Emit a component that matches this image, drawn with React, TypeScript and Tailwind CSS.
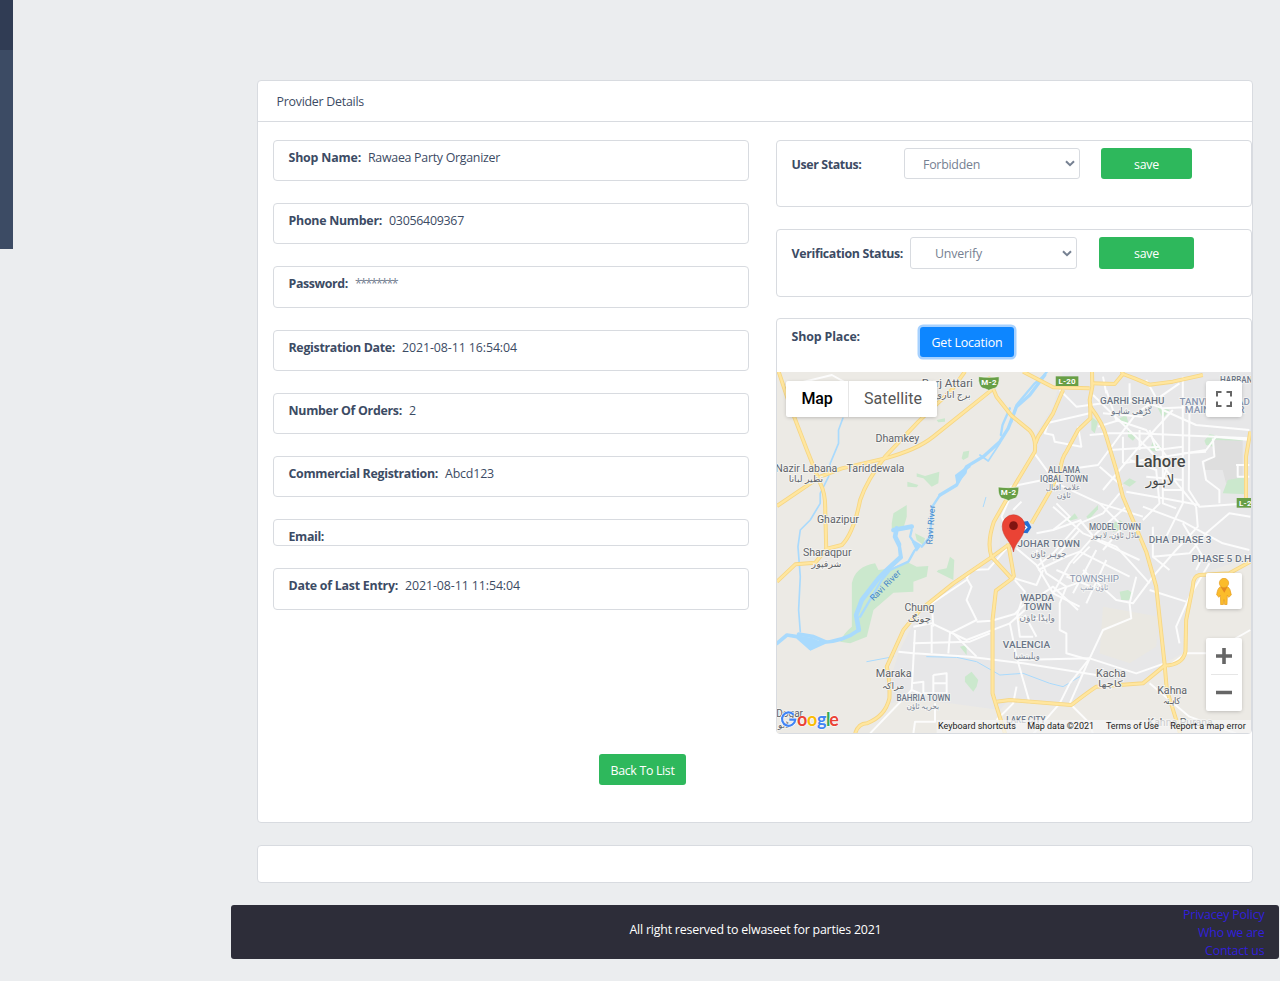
import React from "react";

const details = [
  { label: "Shop Name:", value: "Rawaea Party Organizer", lw: 72.5, vw: 132 },
  { label: "Phone Number:", value: "03056409367", lw: 93.5, vw: 75 },
  { label: "Password:", value: "********", lw: 59.5, vw: 42 },
  { label: "Registration Date:", value: "2021-08-11 16:54:04", lw: 106.5, vw: 115 },
  { label: "Number Of Orders:", value: "2", lw: 113.5, vw: 7 },
  { label: "Commercial Registration:", value: "Abcd123", lw: 149.5, vw: 49 },
  { label: "Email:", value: "", lw: 35.5, vw: 0 },
  { label: "Date of Last Entry:", value: "2021-08-11 11:54:04", lw: 109.5, vw: 115 },
];

// Text that is squeezed or stretched to an exact advance width.
function Fit({ w, children, className = "" }: { w: number; children: string; className?: string }) {
  const ref = React.useRef<HTMLSpanElement>(null);
  React.useLayoutEffect(() => {
    const el = ref.current;
    if (!el || !children) return;
    el.style.letterSpacing = "0px";
    const natural = el.getBoundingClientRect().width;
    el.style.letterSpacing = `${(w - natural) / children.length}px`;
  }, [w, children]);
  return (
    <span ref={ref} className={`inline-block whitespace-pre ${className}`}>
      {children}
    </span>
  );
}

type LabelProps = { x: number; y: number; w?: number; s?: number; c?: string; b?: number; children: string };
function L({ x, y, w, s = 33, c = "#5f6368", b = 400, children }: LabelProps) {
  return (
    <text
      x={x}
      y={y}
      textAnchor="middle"
      fontSize={s}
      fontWeight={b}
      fill={c}
      stroke="#f5f5f3"
      strokeWidth={5}
      paintOrder="stroke"
      textLength={w}
      lengthAdjust="spacingAndGlyphs"
    >
      {children}
    </text>
  );
}

const yellowRoads = [
  "M25 5L60 110L110 240L150 340Q166 370 165 420L168 535",
  "M585 5L545 60L445 155L345 260Q290 330 270 390Q250 490 215 525L168 537L135 578L75 583L20 635",
  "M20 408L150 320L215 295L345 265Q440 240 490 200L665 60",
  "M655 20L680 80L725 137L780 182Q800 205 795 245L735 345L672 455Q650 520 665 560L725 625",
  "M760 5L850 52L960 55",
  "M967 5L968 50L960 90L962 110Q1000 160 1010 200L1040 300L1060 380L1130 545L1160 650L1185 880L1192 960L1225 1065L1232 1092",
  "M880 60L850 130L805 200L795 225",
  "M962 100L962 145L925 180L890 245Q875 265 872 300L840 365L785 460",
  "M967 40L1035 42L1060 12L1095 25L1140 44L1210 35L1300 15",
  "M1060 12L1055 0",
  "M1443 185L1430 260L1430 405",
  "M255 1090Q265 1060 290 1060Q345 1040 358 985Q360 930 350 890L400 780L450 720L550 640L660 565L715 525",
  "M715 520L732 618L725 627L678 662L668 750L668 970L680 1010L706 1092",
  "M1443 575L1380 610L1290 615Q1270 620 1270 650L1250 750L1248 845Q1240 885 1185 887L1120 940L980 950Q950 970 905 1005L720 990L680 995",
];

const whiteRoads = [
  "M40 50L185 15L230 40", "M790 245L860 340L990 400L1120 440", "M720 350L820 330L880 300L985 285L1100 130L1230 40",
  "M830 160L960 130", "M835 160L825 190L850 195L855 215L935 230L925 170", "M960 195L1020 190L1100 190L1440 205",
  "M1000 100L1110 90L1180 115L1280 110L1400 130", "M970 75L1140 240L1280 410", "M1130 30L1180 120L1280 165L1440 180",
  "M1010 60L1040 150L1130 180L1200 270", "M1240 20L1240 400L1180 520", "M1260 120L1258 360L1290 410L1440 400",
  "M1180 120L1180 400L1220 415", "M1070 365L1180 385L1290 405", "M1050 370L1000 430L930 460L850 550L800 590",
  "M1080 270L1160 300L1170 400L1120 450", "M1120 410L1240 455L1360 520L1440 540", "M1280 410L1285 470L1220 540L1150 620",
  "M1443 440L1380 430L1310 490L1260 550L1150 560", "M1060 280L1310 240L1340 200L1440 210", "M1330 205L1335 260L1300 275L1310 330L1350 360L1350 400",
  "M1400 285L1440 285M1405 285L1405 320L1440 320", "M930 450L980 510L1110 570", "M850 410L940 490L1040 530L1140 640",
  "M740 535L800 585L850 670L930 710", "M1070 410L980 490L900 580L850 670", "M805 600L890 560L930 545L1080 620",
  "M800 540L830 610L890 650L870 700L870 780L890 790L890 850L960 870", "M940 600L1040 690L1090 700L1150 620", "M1080 700L1085 745L1000 780L960 865L900 1000",
  "M1100 620L1080 700M1010 570L950 700M980 540L910 670", "M1140 660L1250 695", "M590 625L605 650L590 690L605 720L620 750L540 790L535 850",
  "M590 625L605 600L655 598L715 530", "M430 770L485 760L590 810L720 760L765 720", "M490 770L485 700L590 630", "M385 845L430 850L600 860L760 880L980 915",
  "M435 780L425 960L460 975L460 935L425 940", "M430 820L600 815L660 790", "M485 765L485 850M550 790L620 860", "M490 915L530 910L530 970L460 970M490 915L490 970M490 940L530 940",
  "M425 960L300 1090", "M430 1090L435 1055L495 1055L495 1000", "M620 755L665 752L735 732L785 680", "M720 760L740 860L780 1000", "M740 870L960 865L1100 910L1185 880",
  "M960 865L900 940L870 1000L790 1092", "M1140 940L1260 1040L1400 1090", "M905 1005L960 1060L970 1092", "M1180 900L1250 850L1320 850L1443 780", "M1230 820L1220 770L1260 680L1320 580",
  "M680 1050L730 1000L740 950", "M735 630L765 665L742 735L750 800L790 800M765 735L800 800M740 745L830 745",
  "M735 625L800 645L820 600M850 665L920 640L950 600M860 600L930 630", "M790 690L850 650L925 720",
  "M850 480L900 440L860 400M990 400L1060 470L1000 540", "M1150 470L1150 560L1200 600M1240 460L1300 560L1280 600", "M870 60L920 110L1000 100M1000 130L1120 140M1020 240L1170 230",
  "M735 350L695 440L720 500M755 395L730 420M800 490L850 480L935 450M850 570L930 480M910 580L960 530M890 620L990 660",
  "M1210 120L1100 240L1000 360M1110 180L1110 240M1060 200L1060 280M1200 270L1180 330M990 290L1060 350M1130 320L1240 330M1180 360L1240 360",
  "M1010 70L1000 20M1080 40L1080 100M985 170L1050 150M1140 180L1160 240L1240 230M1240 250L1310 245",
];

const greens = [
  "M365 460L370 430L410 405L410 440L400 475L365 475Z", "M440 310L465 318L508 305L505 340L485 350L460 325L440 320Z", "M412 335L445 345L440 352L412 350Z",
  "M575 265L580 245L598 242L595 262L580 270Z", "M500 150L525 145L525 155L505 157Z", "M435 490L465 505L460 525L440 510Z",
  "M245 640Q255 590 315 580L325 600L365 595L410 575L440 590L475 588L470 620L430 635L430 665L370 668L310 720L290 800L240 820L210 815Q220 790 245 770Z",
  "M505 600L530 595L540 560L553 570L550 630L500 605Z", "M585 920L605 905L625 930L620 950L610 965L585 935Z", "M570 830L590 825L590 855Z",
  "M1050 145L1070 135L1078 165L1065 170Z", "M1160 105L1200 120L1180 145Z", "M1140 240L1150 215L1175 230L1160 245Z", "M1305 212L1320 193L1335 195L1332 230L1310 225Z",
  "M1375 330L1430 320L1430 373L1360 370Z", "M1335 205L1420 208L1420 212L1335 210Z", "M1060 340L1080 325L1100 335L1080 350Z", "M950 440L985 405L985 418L957 450Z",
  "M890 455L915 430L925 445Z", "M1030 460L1050 450L1065 460L1060 480L1030 485Z", "M1050 665L1075 660L1090 670L1080 690L1055 690Z", "M965 140L985 155L975 190L965 180Z", "M1075 180L1100 200L1090 212L1075 200Z",
];

function Shield({ x, y }: { x: number; y: number }) {
  return (
    <g transform={`translate(${x} ${y})`}>
      <path d="M-31 -18Q0 -14 31 -18Q32 8 20 16Q8 19 0 23Q-8 19 -20 16Q-32 8 -31 -18Z" fill="#689f46" stroke="#f4f7ee" strokeWidth="2" />
      <text y="7" textAnchor="middle" fontSize="24" fontWeight="700" fill="white" textLength="46">M-2</text>
    </g>
  );
}

function MapDrawing() {
  return (
    <svg className="block h-full w-full" viewBox="20 6 1425 1083" preserveAspectRatio="none" fontFamily="Roboto, 'DejaVu Sans', sans-serif">
      <rect x="0" y="0" width="1460" height="1100" fill="#eceae5" />
      <path
        d="M880 0L850 110L800 190L790 260L730 370L690 440L690 530L590 620L450 720L385 850L370 900L345 930L358 1000L430 990L540 1000L690 1020L720 985L900 1000L980 945L1120 935L1185 880L1248 845L1265 620L1450 560V0Z"
        fill="#e7e7e8"
      />
      <path d="M1000 710L1170 740L1160 830L1080 880L990 850Z" fill="#eae8e2" />
      <path d="M1335 210H1420V330L1370 340L1360 300H1300L1310 270L1335 255Z" fill="#dedede" />
      <g fill="#cbe8cd">{greens.map((d) => <path key={d} d={d} />)}</g>
      <g fill="none" stroke="#a9dafd" strokeLinecap="round" strokeLinejoin="round">
        <path d="M825 15L780 75L740 110L715 175L690 215L640 260L590 290L560 345L510 375" strokeWidth="10" />
        <path d="M835 0L820 20L795 40L740 105L725 155M720 115L698 165L693 195" strokeWidth="7" />
        <path d="M630 255L655 273L690 220M560 345L580 305L600 290" strokeWidth="5" />
        <path d="M510 375L487 410L480 500L455 530" strokeWidth="7" />
        <path d="M370 480L425 470M380 475L375 500L390 530L393 560L350 600L325 625L275 690L258 735L266 780" strokeWidth="14" />
        <path d="M425 480L420 500L440 530L415 575L360 600L335 630L270 740" strokeWidth="7" />
        <path d="M266 780Q220 815 150 818L120 835L80 800L50 795L20 820M85 792L130 800L165 815" strokeWidth="11" />
        <path d="M218 145L205 180L205 220L180 280L175 320L150 370L150 400L120 450L90 480L83 530L90 620L85 720L90 785" strokeWidth="5" />
        <path d="M290 875L370 860M470 860L560 862L620 875L690 915L760 910L840 940L880 950L930 920M648 382L640 410" strokeWidth="3" />
      </g>
      <path d="M393 528L405 480L420 510L440 530L400 570Z" fill="#eceae5" />
      <path d="M425 515L440 545L455 525L430 510ZM560 345L555 315L595 285L590 310ZM80 795L120 842L165 822L130 805Z" fill="#a9dafd" />
      <g fill="none" stroke="#fcfcfc" strokeWidth="6" strokeLinejoin="round">{whiteRoads.map((d) => <path key={d} d={d} />)}</g>
      <g fill="none" stroke="#f6d684" strokeWidth="12" strokeLinejoin="round">{yellowRoads.map((d) => <path key={d} d={d} />)}</g>
      <g fill="none" stroke="#ffe69f" strokeWidth="7" strokeLinejoin="round">{yellowRoads.map((d) => <path key={d} d={d} />)}</g>

      <L x={532} y={50} w={154}>Burj Attari</L>
      <L x={548} y={85} s={28}>برج اتاری</L>
      <L x={382} y={215} w={132}>Dhamkey</L>
      <L x={108} y={305} w={186}>Nazir Labana</L>
      <L x={107} y={337} s={27} w={104}>نظیر لبانا</L>
      <L x={316} y={305} w={174}>Tariddewala</L>
      <L x={203} y={459} w={126}>Ghazipur</L>
      <L x={171} y={558} w={146}>Sharaqpur</L>
      <L x={169} y={592} s={27} w={90}>شرقپور</L>
      <L x={448} y={724} w={90}>Chung</L>
      <L x={448} y={756} s={27} w={70}>چونگ</L>
      <L x={371} y={922} w={108}>Maraka</L>
      <L x={369} y={957} s={27} w={68}>مراکہ</L>
      <L x={58} y={1040} w={80}>Dogar</L>
      <L x={40} y={1075} s={27}>ڈنو</L>
      <L x={1024} y={920} w={90}>Kacha</L>
      <L x={1022} y={951} s={27} w={74}>کاچھا</L>
      <L x={1208} y={971} w={90}>Kahna</L>
      <L x={1206} y={1003} s={27} w={54}>کاہنہ</L>
      <L x={1232} y={1067} w={196}>Kahna Purana</L>
      <L x={1172} y={291} w={152} s={50} b={500} c="#444746">Lahore</L>
      <L x={1172} y={346} w={86} s={42} c="#444746">لاہور</L>
      <g>
        <L x={1088} y={102} w={194} s={28} b={500} c="#6b7587">GARHI SHAHU</L>
        <L x={1086} y={133} w={122} s={27} c="#6b7587">گڑھی شاہو</L>
        <L x={1408} y={39} w={112} s={26} b={500} c="#6b7587">HARBANS</L>
        <L x={1336} y={104} w={212} s={27} b={500} c="#8996b0">TANVEER ABAD</L>
        <L x={1336} y={129} w={180} s={27} b={500} c="#8996b0">MAIN BAZAR</L>
        <L x={883} y={310} w={96} s={26} b={500} c="#6b7587">ALLAMA</L>
        <L x={883} y={335} w={144} s={26} b={500} c="#6b7587">IQBAL TOWN</L>
        <L x={880} y={359} w={104} s={24} c="#7b8494">علامہ اقبال</L>
        <L x={882} y={384} w={42} s={24} c="#7b8494">ٹاؤن</L>
        <L x={1036} y={480} w={156} s={26} b={500} c="#6b7587">MODEL TOWN</L>
        <L x={1038} y={505} w={146} s={24} c="#7b8494">ماڈل ٹاؤن، لاہور</L>
        <L x={837} y={530} w={188} s={30} b={500} c="#6b7587">JOHAR TOWN</L>
        <L x={836} y={560} w={108} s={26} c="#7b8494">جوہر ٹاؤن</L>
        <L x={1232} y={519} w={188} s={29} b={500} c="#6b7587">DHA PHASE 3</L>
        <L x={1360} y={576} w={188} s={29} b={500} c="#6b7587">PHASE 5 D.H.</L>
        <L x={974} y={635} w={148} s={25} c="#8996b0">TOWNSHIP</L>
        <L x={974} y={660} w={84} s={24} c="#99a2b4">ٹاؤن شپ</L>
        <L x={802} y={692} w={102} s={29} b={500} c="#6b7587">WAPDA</L>
        <L x={804} y={721} w={84} s={29} b={500} c="#6b7587">TOWN</L>
        <L x={802} y={753} w={108} s={26} c="#7b8494">واپڈا ٹاؤن</L>
        <L x={770} y={835} w={142} s={29} b={500} c="#6b7587">VALENCIA</L>
        <L x={770} y={866} w={80} s={26} c="#7b8494">ویلینشیا</L>
        <L x={460} y={992} w={162} s={26} b={500} c="#6b7587">BAHRIA TOWN</L>
        <L x={458} y={1017} w={98} s={24} c="#7b8494">بحریہ ٹاؤن</L>
        <L x={768} y={1058} w={118} s={26} b={500} c="#6b7587">LAKE CITY</L>
      </g>
      <g fill="#4285c9" fontSize="26">
        <text transform="translate(487 524) rotate(-86)" textLength="118">Ravi River</text>
        <text transform="translate(310 694) rotate(-45)" textLength="118">Ravi River</text>
      </g>
      <Shield x={657} y={38} />
      <Shield x={716} y={369} />
      <rect x="858" y="19" width="68" height="29" fill="#689f46" />
      <text x="892" y="42" textAnchor="middle" fontSize="24" fontWeight="700" fill="white" textLength="52">L-20</text>
      <rect x="1402" y="384" width="60" height="29" fill="#689f46" />
      <text x="1409" y="407" fontSize="24" fontWeight="700" fill="white" textLength="52">L-20</text>

      <path d="M760 455L774 453L785 472L773 490L758 488Z" fill="#2670d3" />
      <path d="M762 464L771 472L762 481" fill="none" stroke="white" strokeWidth="4" />
      <path d="M731 546C727 517 697 502 697 469A34 35 0 0 1 765 469C765 502 735 517 731 546Z" fill="#ea4335" stroke="#c5372c" strokeWidth="1.5" />
      <circle cx="731" cy="467" r="13" fill="#811411" />

      <rect x="500" y="1050" width="945" height="41" fill="#f5f5f5" fillOpacity=".72" />
      <g fontSize="27" fill="#222">
        <text x="504" y="1076" textLength="234">Keyboard shortcuts</text>
        <text x="772" y="1076" textLength="201">Map data ©2021</text>
        <text x="1009" y="1076" textLength="159">Terms of Use</text>
        <text x="1202" y="1076" textLength="227">Report a map error</text>
      </g>
      <g fontSize="54" fontFamily="Lato, sans-serif" fontWeight="700" stroke="white" strokeWidth="3" paintOrder="stroke">
        <path d="M70 1034A20 20 0 1 0 75 1049H57" fill="none" stroke="white" strokeWidth="10" />
        <path d="M70 1034A20 20 0 1 0 75 1049H57" fill="none" stroke="#4285f4" strokeWidth="6.5" />
        <text x="80" y="1068" fill="#ea4335">o</text>
        <text x="110" y="1068" fill="#fbbc05">o</text>
        <text x="140" y="1068" fill="#4285f4">g</text>
        <text x="167" y="1068" fill="#34a853">l</text>
        <text x="177" y="1068" fill="#ea4335">e</text>
      </g>
    </svg>
  );
}

function Chevron() {
  return (
    <svg className="-mt-[2px] h-[7px] w-[10px]" viewBox="0 0 10 7" fill="none" stroke="#768192" strokeWidth="2">
      <path d="M1 1.2L5 5.2L9 1.2" />
    </svg>
  );
}

const control = "rounded-[2px] bg-white shadow-[0_1px_4px_-1px_rgba(0,0,0,0.3)]";

export default function App() {
  return (
    <div className="flex h-[981px] w-[1280px] overflow-hidden bg-[#ebedef] font-['Open_Sans',sans-serif] text-[12.4px] leading-[18px] text-[#3c4b64]">
      <aside className="h-[249px] w-[13px] shrink-0 bg-[#3c4b64]">
        <div className="h-[50px] bg-[#303c54]" />
      </aside>
      <div className="ml-[218px] flex w-[1048px] shrink-0 flex-col pt-[80px]">
        <main className="ml-[26px] w-[996px]">
          <section className="h-[743px] rounded-[4px] border border-[#d8dbe0] bg-white">
            <header className="h-[41px] border-b border-[#d8dbe0] pt-[12px] pl-[18.5px]">
              <Fit w={87.5}>Provider Details</Fit>
            </header>
            <div className="flex h-[613px] gap-[27px] pt-[18px] pl-[15px]">
              <div className="flex w-[476px] flex-col gap-[22px]">
                {details.map((d) => (
                  <div
                    key={d.label}
                    className={`flex shrink-0 gap-[7px] rounded-[4px] border border-[#d8dbe0] pt-[8px] pl-[14.5px] ${d.value ? "h-[41.2px]" : "h-[27.2px]"}`}
                  >
                    <Fit w={d.lw} className="font-bold">{d.label}</Fit>
                    <Fit w={d.vw} className={d.label === "Password:" ? "text-[#768192]" : ""}>{d.value}</Fit>
                  </div>
                ))}
              </div>
              <div className="flex w-[476px] shrink-0 flex-col gap-[22px]">
                <div className="flex h-[67px] shrink-0 rounded-[4px] border border-[#d8dbe0] pt-[7px] pl-[14.5px]">
                  <div className="w-[112.5px] pt-[8px] font-bold"><Fit w={70}>User Status:</Fit></div>
                  <div className="flex h-[31px] w-[176px] items-center justify-between rounded-[3px] border border-[#d8dbe0] pt-[2px] pr-[4px] pl-[18px] text-[#768192]">
                    <Fit w={57}>Forbidden</Fit>
                    <Chevron />
                  </div>
                  <button className="ml-[21px] h-[31px] w-[91px] rounded-[3px] bg-[#2eb85c] pt-[2px] text-white"><Fit w={25}>save</Fit></button>
                </div>
                <div className="flex h-[68px] shrink-0 rounded-[4px] border border-[#d8dbe0] pt-[7px] pl-[14.5px]">
                  <div className="w-[118.5px] pt-[8px] font-bold"><Fit w={111.5}>Verification Status:</Fit></div>
                  <div className="flex h-[32px] w-[167px] items-center justify-between rounded-[3px] border border-[#d8dbe0] pt-[2px] pr-[4px] pl-[24px] text-[#768192]">
                    <Fit w={47}>Unverify</Fit>
                    <Chevron />
                  </div>
                  <button className="ml-[22px] h-[32px] w-[95px] rounded-[3px] bg-[#2eb85c] pt-[2px] text-white"><Fit w={25}>save</Fit></button>
                </div>
                <div className="-mt-px flex h-[416px] shrink-0 flex-col rounded-[4px] border border-[#d8dbe0]">
                  <div className="flex h-[53px] shrink-0 pt-[8px] pl-[14.5px]">
                    <div className="w-[128.5px] pt-px font-bold"><Fit w={68.5}>Shop Place:</Fit></div>
                    <button className="h-[30px] w-[94px] rounded-[3px] bg-[#0d86ff] pt-[2px] text-white shadow-[0_0_0_2.5px_#a6d1ff]"><Fit w={71}>Get Location</Fit></button>
                  </div>
                  <div className="relative min-h-0 flex-1 overflow-hidden font-[Roboto,sans-serif]">
                    <MapDrawing />
                    <div className={`absolute top-[9px] left-[9px] flex h-[36px] w-[151px] text-[16px] leading-[36px] ${control}`}>
                      <div className="w-[63px] border-r border-[#e6e6e6] text-center font-medium text-black"><Fit w={31}>Map</Fit></div>
                      <div className="flex-1 text-center text-[#565656]"><Fit w={58}>Satellite</Fit></div>
                    </div>
                    <div className={`absolute top-[9px] right-[9px] flex size-[36px] items-center justify-center ${control}`}>
                      <svg className="size-[16px]" viewBox="0 0 16 16" fill="none" stroke="#666" strokeWidth="2">
                        <path d="M1 5.5V1H5.5M10.5 1H15V5.5M15 10.5V15H10.5M5.5 15H1V10.5" />
                      </svg>
                    </div>
                    <div className={`absolute top-[201px] right-[9px] flex size-[36px] items-center justify-center ${control}`}>
                      <svg className="h-[27px] w-[16px]" viewBox="0 0 48 81">
                        <path d="M13 26H35Q43 30 46 51L38 58L34 51L33 80H26L24 65L22 80H14L13 51L9 58L2 51Q4 31 13 26Z" fill="#fbbc2b" stroke="#e59c1f" strokeWidth="2" />
                        <path d="M14 27H34L25 44Z" fill="#e58a23" />
                        <circle cx="24" cy="15" r="14" fill="#fbbc2b" stroke="#e59c1f" strokeWidth="2" />
                      </svg>
                    </div>
                    <div className={`absolute top-[266px] right-[9px] flex h-[73px] w-[36px] flex-col items-center ${control}`}>
                      <svg className="h-[73px] w-[36px]" viewBox="0 0 36 73" fill="none">
                        <path d="M10 18H26M18 10V26M10 54.5H26" stroke="#666" strokeWidth="3.6" />
                        <path d="M5 36.5H32" stroke="#e6e6e6" />
                      </svg>
                    </div>
                  </div>
                </div>
              </div>
            </div>
            <div className="mt-[19px] flex pl-[341px]">
              <button className="h-[31px] w-[87px] rounded-[3px] bg-[#2eb85c] pt-[3px] text-white"><Fit w={64}>Back To List</Fit></button>
            </div>
          </section>
          <section className="mt-[22px] h-[38px] rounded-[4px] border border-[#d8dbe0] bg-white" />
        </main>
        <footer className="mt-[22px] grid h-[54px] grid-cols-[1fr_auto_1fr] rounded-[3px] bg-[#2d2d39] text-white">
          <div />
          <div className="pt-[16px] pl-px"><Fit w={252}>All right reserved to elwaseet for parties 2021</Fit></div>
          <nav className="flex flex-col items-end pt-px pr-[14.5px] text-[#321fdb]">
            <a><Fit w={81.5}>Privacey Policy</Fit></a>
            <a><Fit w={66.5}>Who we are</Fit></a>
            <a><Fit w={59.5}>Contact us</Fit></a>
          </nav>
        </footer>
      </div>
    </div>
  );
}
